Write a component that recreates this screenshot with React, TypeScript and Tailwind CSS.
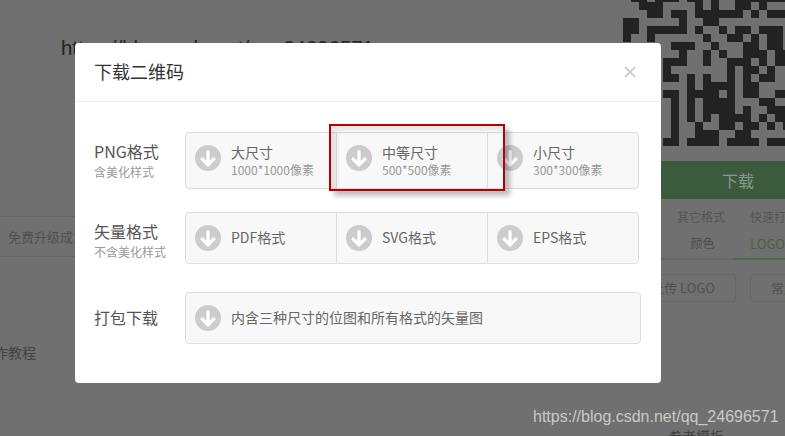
import { type ReactNode } from "react"

const QR_ROWS = [
  [1, 2, 4, 5, 6, 8, 9, 11, 14, 15, 16, 17, 18, 19, 20],
  [2, 3, 4, 9, 11, 14, 15, 17],
  [3, 4, 6, 7, 9, 10, 11, 12, 13, 14, 16, 18, 19, 20],
  [0, 1, 7, 10, 11],
  [0, 1, 3, 4, 5, 6, 7, 9, 12, 14, 15, 17, 18, 19],
  [0, 3, 10, 13, 14, 16, 18, 19],
  [6, 7, 8, 11, 15, 16, 18, 19],
  [7, 10, 12, 15, 16, 17, 19, 20],
  [5, 6, 7, 10, 13, 14, 15, 17, 19, 20],
  [5, 13, 15, 16, 18],
  [5, 6, 8, 10, 13, 15, 17, 18],
  [8, 10, 11, 12, 13, 15, 16],
  [5, 6, 8, 9, 10, 11, 13, 15, 16, 19, 20],
  [6, 8, 10, 11, 12, 13, 17, 18],
  [6, 8, 10, 11, 12, 13, 15, 18, 19, 20],
  [6, 8, 10, 12, 13, 14, 15, 17, 19, 20],
  [6, 9, 12, 13, 15, 16, 18, 20],
  [6, 9, 10, 11, 14, 15],
  [5, 6, 8, 9, 10, 11, 13, 14, 15, 16, 18, 19, 20],
]

function QrCode() {
  return (
    <svg width="168" height="152" viewBox="0 0 168 152" shapeRendering="crispEdges" className="block">
      {QR_ROWS.map((row, r) =>
        row.map((c) => <rect key={`${r}-${c}`} x={c * 8} y={r * 8} width="8" height="8" fill="#232323" />),
      )}
    </svg>
  )
}

function DownloadIcon({ className }: { className?: string }) {
  return (
    <svg width="26" height="26" viewBox="0 0 26 26" className={`shrink-0 ${className ?? ""}`}>
      <circle cx="13" cy="13" r="13" fill="#cccccc" />
      <path d="M13 5.5V19M6.2 13.2L13 20L19.8 13.2" fill="none" stroke="#ffffff" strokeWidth="3.2" />
    </svg>
  )
}

function Cell({ title, sub, last }: { title: string; sub?: string; last?: boolean }) {
  return (
    <div className={`flex flex-1 items-center gap-[10px] pl-[9px] ${last ? "" : "border-r border-[#dddddd]"}`}>
      <DownloadIcon className={sub ? "mb-[5px]" : ""} />
      <div className={sub ? "" : "pb-[2px]"}>
        <div className="text-[14px] leading-[17px] text-[#666666]">{title}</div>
        {sub && <div className="text-[12px] leading-[17px] text-[#999999]">{sub}</div>}
      </div>
    </div>
  )
}

function Row({ label, sub, className, children }: { label: string; sub?: string; className: string; children: ReactNode }) {
  return (
    <div className="flex items-center">
      <div className={`w-[91px] shrink-0 ${sub ? "self-start pt-[8px]" : "pb-[2px]"}`}>
        <div className="text-[16px] leading-[22px] text-[#555555]">{label}</div>
        {sub && <div className="mt-[2px] text-[12px] leading-[16px] text-[#999999]">{sub}</div>}
      </div>
      <div className={`flex rounded-[4px] border border-[#dddddd] bg-[#f8f8f8] ${className}`}>{children}</div>
    </div>
  )
}

function Modal() {
  return (
    <div className="absolute left-[75px] top-[43px] h-[340px] w-[586px] rounded-[4px] bg-white">
      <div className="flex h-[59px] items-center justify-between border-b border-[#eeeeee] pl-[19px] pr-[25px]">
        <div className="pb-[2px] text-[18px] text-[#333333]">下载二维码</div>
        <svg width="12" height="12" viewBox="0 0 12 12">
          <path d="M1 1L11 11M11 1L1 11" stroke="#cfcfcf" strokeWidth="1.8" fill="none" />
        </svg>
      </div>
      <div className="flex flex-col pl-[19px] pt-[30px]">
        <Row label="PNG格式" sub="含美化样式" className="h-[57px] w-[454px]">
          <Cell title="大尺寸" sub="1000*1000像素" />
          <Cell title="中等尺寸" sub="500*500像素" />
          <Cell title="小尺寸" sub="300*300像素" last />
        </Row>
        <div className="mt-[23px]">
          <Row label="矢量格式" sub="不含美化样式" className="h-[52px] w-[454px]">
            <Cell title="PDF格式" />
            <Cell title="SVG格式" />
            <Cell title="EPS格式" last />
          </Row>
        </div>
        <div className="mt-[28px]">
          <Row label="打包下载" className="h-[52px] w-[456px]">
            <Cell title="内含三种尺寸的位图和所有格式的矢量图" last />
          </Row>
        </div>
      </div>
    </div>
  )
}

export default function App() {
  return (
    <div
      className="relative flex h-[436px] w-[785px] overflow-hidden bg-[#6f706f]"
      style={{ fontFamily: '"Noto Sans CJK SC", "Noto Sans", sans-serif' }}
    >
      {/* page behind the dialog */}
      <div className="w-[623px] shrink-0">
        <div className="ml-[61px] mt-[33px] whitespace-nowrap text-[20.4px] leading-[30px] text-[#242424] [font-family:'Liberation_Sans',sans-serif]">
          https://blog.csdn.net/qq_24696571
        </div>
        <div className="mt-[153px] flex h-[41px] items-center whitespace-nowrap border-y border-[#666766] pl-2 text-[13px] text-[#4f504f]">
          免费升级成为会员
        </div>
        <div className="-ml-[20px] mt-[85px] text-[14px] leading-[21px] text-[#434443]">制作教程</div>
      </div>

      <div className="-ml-[13px] flex min-w-0 flex-1 flex-col self-start">
        <div className="-mt-[6px] ml-[13px]">
          <QrCode />
        </div>
        <div className="mt-[15px] flex h-[38px] items-center justify-center bg-[#3c5a3c] pl-[81px] text-[16px] text-[#8a9a8a]">
          下载
        </div>
        <div className="mt-[9px] flex gap-[25px] whitespace-nowrap pl-[67px] text-[12px] leading-[18px] text-[#555655]">
          <span>其它格式</span>
          <span>快速打印</span>
        </div>
        <div className="mt-[8px] flex h-[26px] whitespace-nowrap border-b-2 border-[#666766] text-[12px] text-[#4c4d4c]">
          <div className="flex w-[128px] justify-center pl-[62px]">颜色</div>
          <div className="h-[26px] flex-1 border-b-2 border-[#4a6b4a] pl-[17px] text-[13px] text-[#45604a]">LOGO</div>
        </div>
        <div className="mt-[14px] flex gap-[14px] whitespace-nowrap text-[13px] text-[#4f504f]">
          <div className="flex h-[28px] w-[126px] shrink-0 items-center justify-end rounded-[3px] border border-[#666766] pr-[20px]">
            上传 LOGO
          </div>
          <div className="flex h-[28px] w-[60px] shrink-0 items-center rounded-[3px] border border-[#666766] pl-[20px]">
            常用
          </div>
        </div>
        <div className="ml-[58px] mt-[125px] text-[14px] leading-[18px] text-[#404140]">参考模板</div>
      </div>

      <Modal />

      {/* red annotation box */}
      <div className="absolute left-[329px] top-[124px] h-[67px] w-[176px] border-2 border-[#b80000] shadow-[5px_5px_5px_rgba(0,0,0,0.25),inset_5px_5px_5px_rgba(0,0,0,0.1)]" />

      {/* watermark */}
      <div className="absolute left-[533px] top-[407px] whitespace-nowrap text-[16px] leading-[20px] text-[#c9c9c9] [font-family:'Liberation_Sans',sans-serif]">
        https://blog.csdn.net/qq_24696571
      </div>
    </div>
  )
}
